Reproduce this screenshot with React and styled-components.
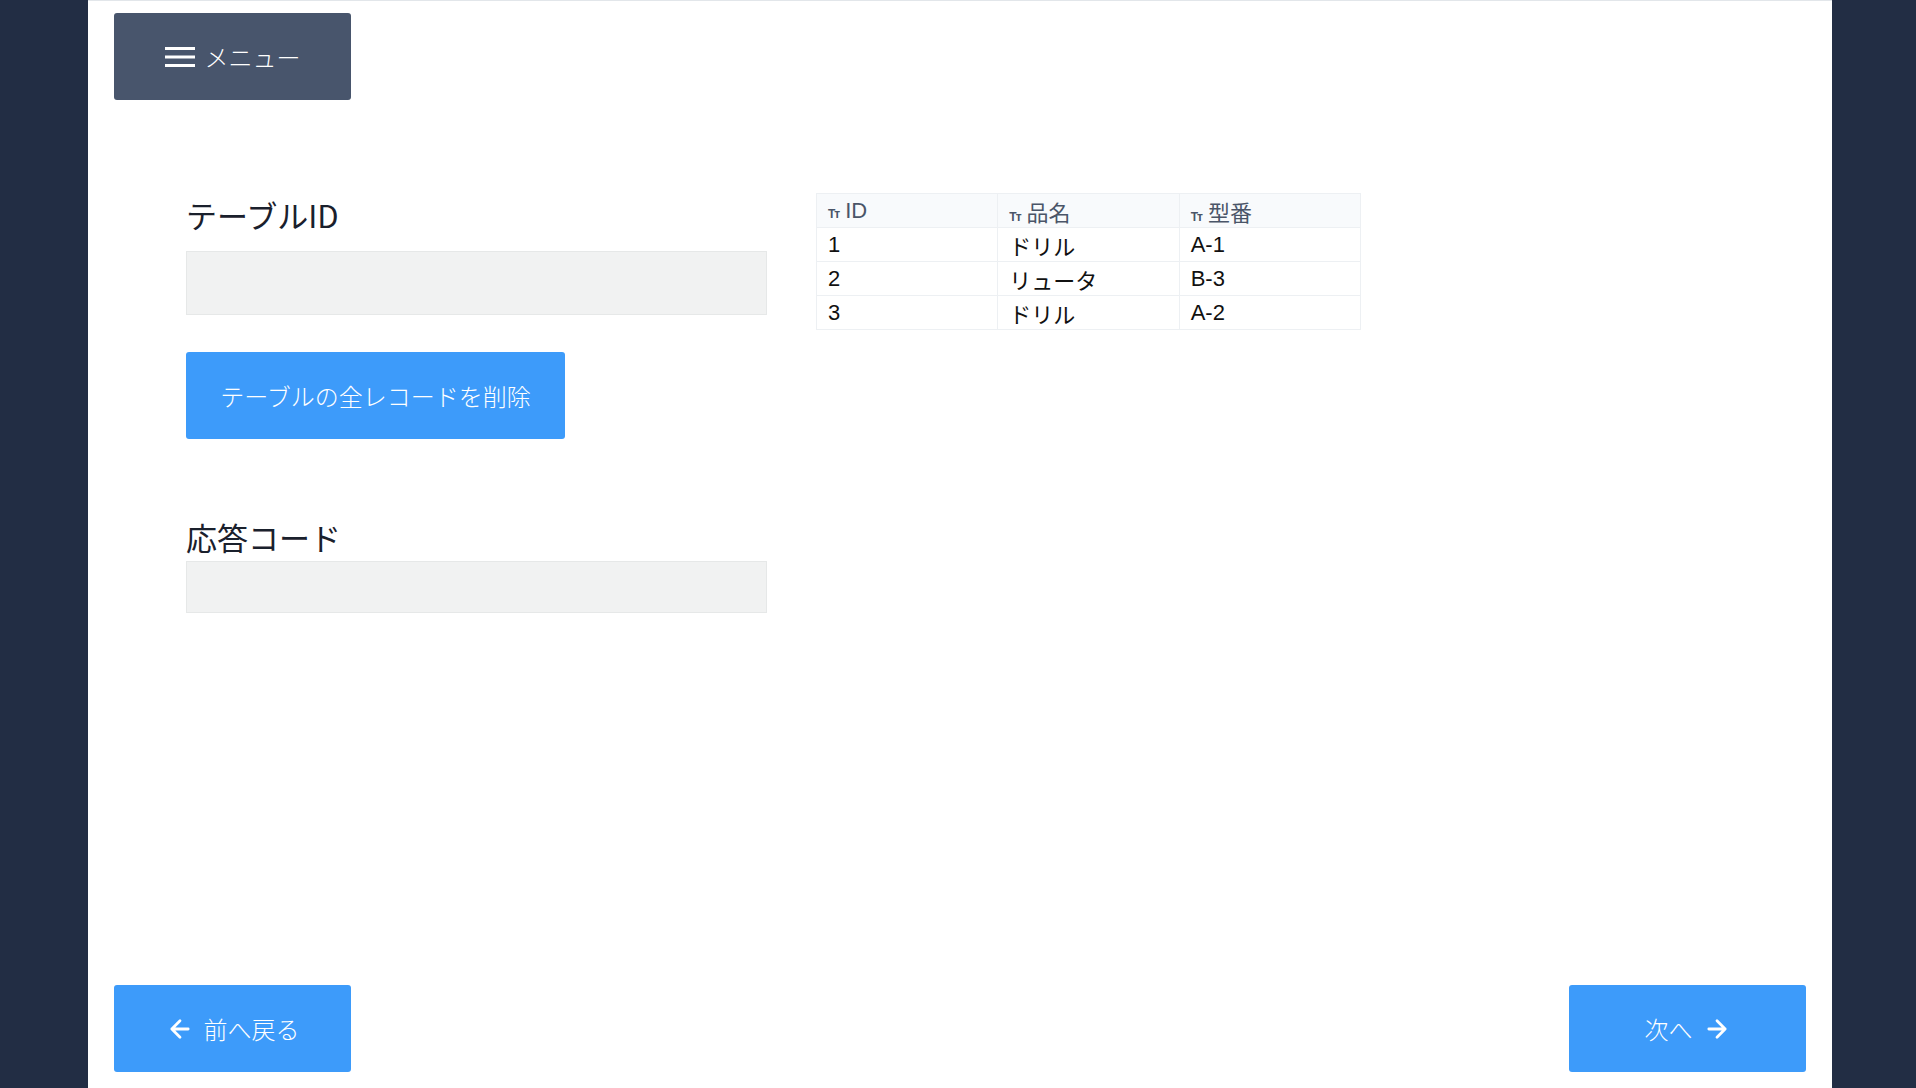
import React from "react";
import styled, { createGlobalStyle } from "styled-components";

const Global = createGlobalStyle`
  html, body { margin: 0; height: 100%; }
  body { background: #222d44; font-family: "Noto Sans CJK JP", "Open Sans", sans-serif; }
  #root { height: 100%; }
`;

const Frame = styled.div`
  height: 1088px;
  display: flex;
  justify-content: center;
  padding-left: 88px;
  padding-right: 84px;
`;

const Page = styled.div`
  flex: 1;
  background: #fff;
  border-top: 1px solid #e2e6ea;
  display: flex;
  flex-direction: column;
  padding: 12px 26px 16px 26px;
  box-sizing: border-box;
`;

const Button = styled.button`
  display: flex;
  align-items: center;
  justify-content: center;
  gap: 10px;
  height: 87px;
  width: ${p => p.w || 237}px;
  border: none;
  border-radius: 3px;
  background: ${p => (p.dark ? "#48556c" : "#3d9bfa")};
  color: #fff;
  font-family: inherit;
  font-size: 24px;
  font-weight: 300;
  cursor: pointer;
`;

const Body = styled.div`
  flex: 1;
  display: flex;
  gap: 49px;
  padding: 93px 0 0 72px;
`;

const LeftCol = styled.div`
  width: 581px;
  display: flex;
  flex-direction: column;
`;

const Heading = styled.h2`
  margin: 0 0 14px;
  font-size: 31px;
  font-weight: 400;
  color: #1a202c;
  line-height: 44px;
`;

const Field = styled.div`
  height: ${p => p.h}px;
  background: #f1f2f2;
  border: 1px solid #e6e8e8;
  box-sizing: border-box;
  margin-bottom: ${p => p.mb || 0}px;
`;

const Table = styled.table`
  border-collapse: collapse;
  width: 545px;
  height: fit-content;
  font-family: "Liberation Sans", "Noto Sans CJK JP", sans-serif;
  font-size: 22px;
  td, th {
    border: 1px solid #edf0f3;
    height: 33px;
    padding: 0 11px;
    text-align: left;
    font-weight: 400;
    width: 33.3%;
  }
  th { background: #f8fafc; color: #4a5568; }
  td { color: #111; }
`;

const Tt = styled.span`
  font-size: 12px;
  font-weight: 700;
  color: #4a5568;
  margin-right: 6px;
  letter-spacing: -1px;
`;

const Footer = styled.div`
  display: flex;
  justify-content: space-between;
`;

const Arrow = ({ dir }) => (
  <svg width="28" height="28" viewBox="0 0 24 24" fill="none" stroke="#fff" strokeWidth="2.4" strokeLinecap="round" strokeLinejoin="round">
    {dir === "left" ? <path d="M19 12H5M12 19l-7-7 7-7" /> : <path d="M5 12h14M12 5l7 7-7 7" />}
  </svg>
);

const rows = [["1", "ドリル", "A-1"], ["2", "リュータ", "B-3"], ["3", "ドリル", "A-2"]];

export default function App() {
  return (
    <>
      <Global />
      <Frame>
        <Page>
          <Button dark>
            <svg width="30" height="22" viewBox="0 0 30 22"><g fill="#fff"><rect y="1" width="30" height="3" /><rect y="9.5" width="30" height="3" /><rect y="18" width="30" height="3" /></g></svg>
            メニュー
          </Button>
          <Body>
            <LeftCol>
              <Heading>テーブルID</Heading>
              <Field h={64} mb={37} />
              <Button w={379}>テーブルの全レコードを削除</Button>
              <Heading style={{ marginTop: 76, marginBottom: 2 }}>応答コード</Heading>
              <Field h={52} />
            </LeftCol>
            <Table>
              <thead>
                <tr><th><Tt>Tт</Tt>ID</th><th><Tt>Tт</Tt>品名</th><th><Tt>Tт</Tt>型番</th></tr>
              </thead>
              <tbody>
                {rows.map(r => (
                  <tr key={r[0]}>{r.map((c, i) => <td key={i}>{c}</td>)}</tr>
                ))}
              </tbody>
            </Table>
          </Body>
          <Footer>
            <Button><Arrow dir="left" />前へ戻る</Button>
            <Button>次へ<Arrow dir="right" /></Button>
          </Footer>
        </Page>
      </Frame>
    </>
  );
}
